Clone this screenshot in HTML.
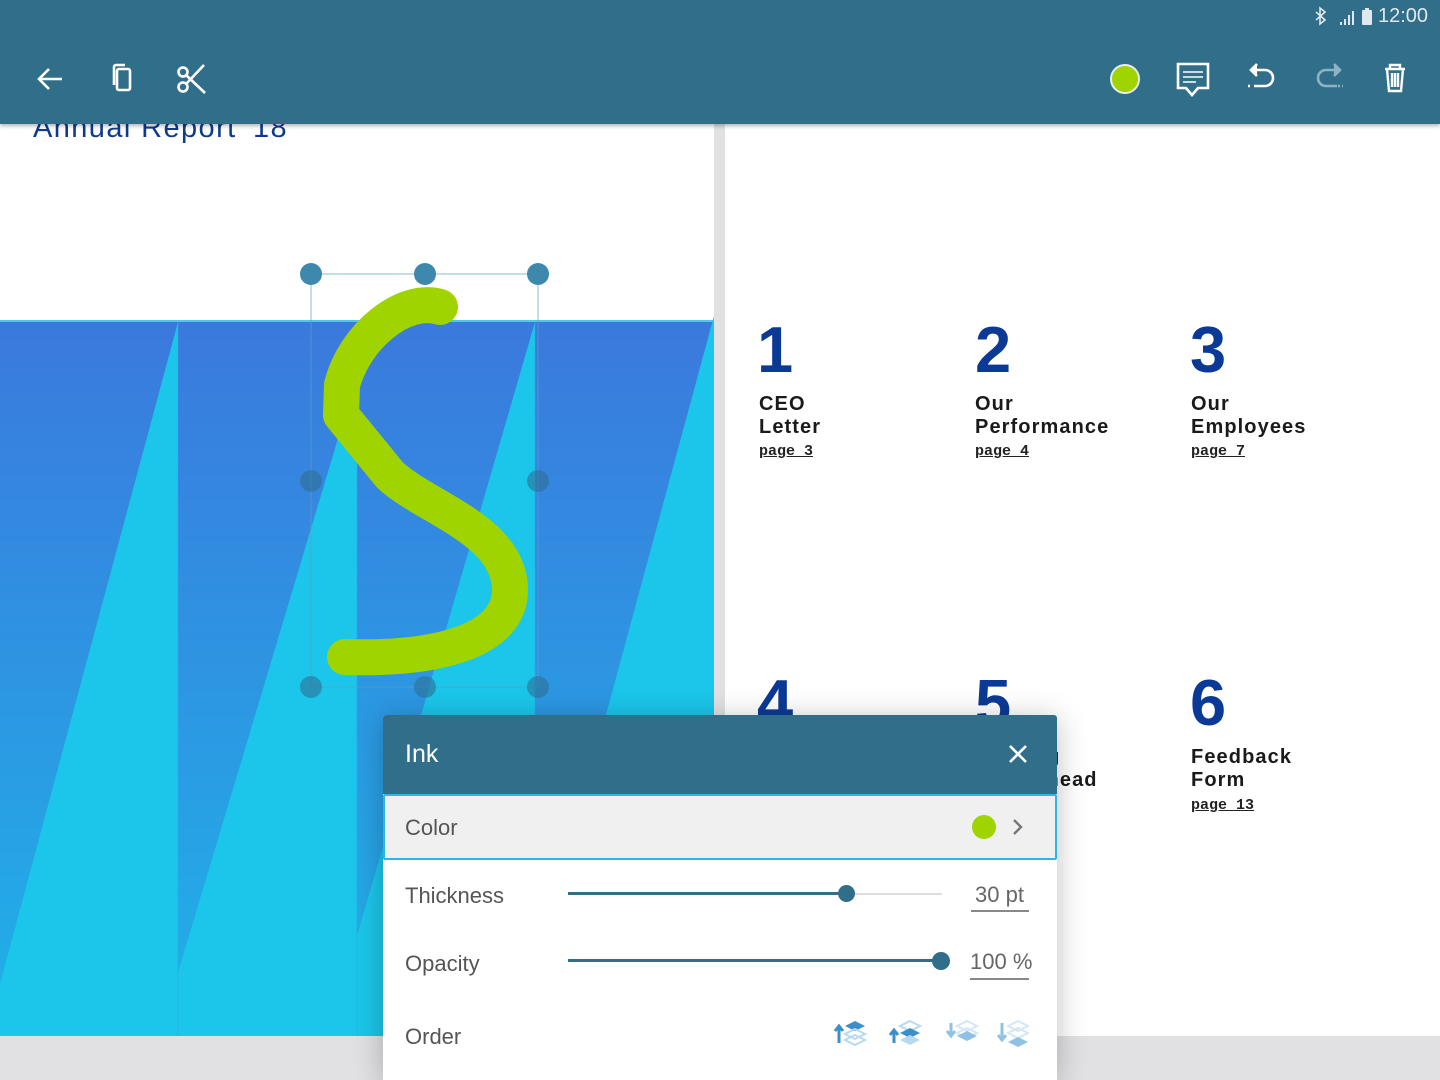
<!DOCTYPE html>
<html><head><meta charset="utf-8"><style>
*{margin:0;padding:0;box-sizing:border-box}
body{width:1440px;height:1080px;overflow:hidden;position:relative;background:#e1e1e3;font-family:"Liberation Sans",sans-serif}
.abs{position:absolute}
.num{position:absolute;font-weight:bold;font-size:65px;color:#0b3a96;line-height:1}
.lab{position:absolute;font-weight:bold;font-size:20px;color:#1a1a1a;line-height:23px;letter-spacing:1.1px}
.pg{position:absolute;font-family:"Liberation Mono",monospace;font-size:15px;color:#222;text-decoration:underline;font-weight:bold}
.prow{position:absolute;left:405px;font-size:22px;color:#555}
</style></head><body>
<div class="abs" style="left:0;top:0;width:714px;height:1036px;background:#fff"></div>
<div class="abs" style="left:725px;top:0;width:715px;height:1036px;background:#fff"></div>
<div class="abs" style="left:33px;top:112px;font-size:29px;color:#0d3a8c;letter-spacing:1.4px">Annual Report '18</div>
<svg class="abs" style="left:0;top:0" width="714" height="1036">
<defs><linearGradient id="g" x1="0" y1="0" x2="0" y2="1"><stop offset="0" stop-color="#3b79dd"/><stop offset="1" stop-color="#1fb2e8"/></linearGradient></defs>
<rect x="0" y="320" width="714" height="716" fill="url(#g)"/>
<rect x="0" y="320" width="714" height="2" fill="#4fc7f0"/>
<g fill="#1bc6ea">
<polygon points="178,322 178,1036 -14,1036"/>
<polygon points="357,375 357,1036 159,1036"/>
<polygon points="535,322 535,1036 328,1036"/>
<polygon points="714,316 714,1036 519,1036"/>
</g>
<g stroke="#2fa8e0" stroke-width="1" opacity="0.5"><line x1="178" y1="322" x2="178" y2="1036"/><line x1="357" y1="322" x2="357" y2="1036"/><line x1="535" y1="322" x2="535" y2="1036"/></g>
<rect x="311" y="274" width="227" height="413" fill="none" stroke="#5a9ec0" stroke-width="1" opacity="0.7"/>
<path d="M440,307 C405,296 355,335 342,385 L341,415 L390,475 C425,508 510,530 510,590 C510,640 440,660 345,657" fill="none" stroke="#9fd400" stroke-width="36" stroke-linecap="round" stroke-linejoin="round"/>
<g fill="#3d88ad"><circle cx="311" cy="274" r="11"/><circle cx="425" cy="274" r="11"/><circle cx="538" cy="274" r="11"/></g>
<g fill="#2f6f95" opacity="0.6"><circle cx="311" cy="481" r="11"/><circle cx="538" cy="481" r="11"/><circle cx="311" cy="687" r="11"/><circle cx="425" cy="687" r="11"/><circle cx="538" cy="687" r="11"/></g>
</svg>
<div class="num" style="left:757px;top:317px">1</div>
<div class="num" style="left:975px;top:317px">2</div>
<div class="num" style="left:1190px;top:317px">3</div>
<div class="lab" style="left:759px;top:393px">CEO<br>Letter</div>
<div class="lab" style="left:975px;top:393px">Our<br>Performance</div>
<div class="lab" style="left:1191px;top:393px">Our<br>Employees</div>
<div class="pg" style="left:759px;top:443px">page 3</div>
<div class="pg" style="left:975px;top:443px">page 4</div>
<div class="pg" style="left:1191px;top:443px">page 7</div>
<div class="num" style="left:757px;top:670px">4</div>
<div class="num" style="left:975px;top:670px">5</div>
<div class="num" style="left:1190px;top:670px">6</div>
<div class="lab" style="left:975px;top:746px">Looking</div>
<div class="lab" style="left:1031px;top:769px">Ahead</div>
<div class="lab" style="left:1191px;top:746px">Feedback<br>Form</div>
<div class="pg" style="left:1191px;top:797px">page 13</div>
<div class="abs" style="left:0;top:0;width:1440px;height:124px;background:#316e8a;box-shadow:0 2px 4px rgba(0,0,0,0.3)"></div>
<div class="abs" style="left:1378px;top:5px;font-size:20px;color:#dfe8ee">12:00</div>
<svg class="abs" style="left:1310px;top:6px" width="66" height="22" fill="none" stroke="#dfe8ee" stroke-width="1.6">
<path d="M6,6 L15,14 L10,18 L10,2 L15,6 L6,14"/>
<g fill="#dfe8ee" stroke="none"><rect x="30" y="16" width="2" height="3"/><rect x="34" y="13" width="2" height="6"/><rect x="38" y="9" width="2" height="10"/><rect x="42" y="5" width="2" height="14"/><rect x="52" y="4" width="10" height="15" rx="1"/><rect x="55" y="2" width="4" height="3"/></g>
</svg>
<svg class="abs" style="left:30px;top:58px" width="200" height="44" fill="none" stroke="#fff" stroke-width="2.6">
<path d="M32,21 H10 M19,11 L9,21 L19,31"/>
<rect x="87" y="11" width="13" height="21" rx="2"/><path d="M84,27 V9 a2,2 0 0 1 2,-2 H95"/>
<circle cx="153" cy="14" r="4.5"/><circle cx="153" cy="29" r="4.5"/><path d="M156,17 L175,35 M156,26 L174,7"/>
</svg>
<svg class="abs" style="left:1100px;top:55px" width="320" height="50" fill="none" stroke="#fff" stroke-width="2.6">
<circle cx="25" cy="24" r="14" fill="#9fd400" stroke="#e8eef2" stroke-width="2"/>
<path d="M78,9 H108 V33 H98 L92,40 L86,33 H78 Z"/><path d="M83,17 H103 M83,22 H103 M83,27 H96" stroke-width="1.4"/>
<path d="M156,15 H165 a8,8 0 0 1 0,16 H154" /><path d="M157,9 L151,15 L157,21" fill="#fff"/><path d="M148,31 H152" stroke-dasharray="2 2"/>
<g stroke="#8fb3c6"><path d="M235,15 H226 a8,8 0 0 0 0,16 H237"/><path d="M234,9 L240,15 L234,21" fill="#8fb3c6"/><path d="M238,31 H243" stroke-dasharray="2 2"/></g>
<path d="M285,14 H305 M290,14 V10 H300 V14 M287,14 L289,36 H301 L303,14 M292,18 V32 M295,18 V32 M298,18 V32" stroke-width="2.4"/>
</svg>
<div class="abs" style="left:383px;top:715px;width:674px;height:365px;background:#fff;box-shadow:0 4px 30px rgba(0,0,0,0.25);border-radius:3px 3px 0 0"></div>
<div class="abs" style="left:383px;top:715px;width:674px;height:79px;background:#316e8a;border-radius:3px 3px 0 0"></div>
<div class="abs" style="left:405px;top:740px;font-size:25px;color:#fff">Ink</div>
<svg class="abs" style="left:1006px;top:742px" width="24" height="24" stroke="#fff" stroke-width="2.6"><path d="M4,4 L20,20 M20,4 L4,20"/></svg>
<div class="abs" style="left:383px;top:794px;width:674px;height:66px;background:#f0f0f0;border:2px solid #2fb5e6;border-radius:2px"></div>
<div class="prow" style="top:815px">Color</div>
<div class="abs" style="left:972px;top:815px;width:24px;height:24px;border-radius:50%;background:#9fd400"></div>
<svg class="abs" style="left:1010px;top:817px" width="16" height="20" fill="none" stroke="#777" stroke-width="2.4"><path d="M4,3 L11,10 L4,17"/></svg>
<div class="prow" style="top:883px">Thickness</div>
<div class="abs" style="left:568px;top:893px;width:374px;height:2px;background:#ddd"></div>
<div class="abs" style="left:568px;top:892px;width:278px;height:3px;background:#316e8a"></div>
<div class="abs" style="left:838px;top:885px;width:17px;height:17px;border-radius:50%;background:#316e8a"></div>
<div class="abs" style="left:975px;top:882px;font-size:22px;color:#666">30 pt</div>
<div class="abs" style="left:971px;top:910px;width:58px;height:2px;background:#888"></div>
<div class="prow" style="top:951px">Opacity</div>
<div class="abs" style="left:568px;top:959px;width:374px;height:3px;background:#316e8a"></div>
<div class="abs" style="left:932px;top:952px;width:18px;height:18px;border-radius:50%;background:#316e8a"></div>
<div class="abs" style="left:970px;top:949px;font-size:22px;color:#666">100 %</div>
<div class="abs" style="left:970px;top:978px;width:59px;height:2px;background:#888"></div>
<div class="prow" style="top:1024px">Order</div>
<svg class="abs" style="left:828px;top:1015px" width="210" height="40">
<g transform="translate(5,0)"><path d="M6,28 V12 M2,16 L6,11 L10,16" stroke="#3b8fc8" stroke-width="3" fill="none"/><polygon points="22,6 32,11 22,16 12,11" fill="#3b8fc8"/><g fill="none" stroke="#b9d9ee" stroke-width="2"><polygon points="22,14 32,19 22,24 12,19"/><polygon points="22,20 32,25 22,30 12,25"/></g></g>
<g transform="translate(60,0)"><path d="M6,28 V16 M2,20 L6,15 L10,20" stroke="#3b8fc8" stroke-width="3" fill="none"/><polygon points="22,6 32,11 22,16 12,11" fill="none" stroke="#b9d9ee" stroke-width="2"/><polygon points="22,13 32,18 22,23 12,18" fill="#3b8fc8"/><polygon points="22,20 32,25 22,30 12,25" fill="#b9d9ee"/></g>
<g transform="translate(117,0)"><path d="M6,8 V20 M2,16 L6,21 L10,16" stroke="#8fc1e4" stroke-width="3" fill="none"/><g fill="none" stroke="#d4e8f4" stroke-width="2"><polygon points="22,6 32,11 22,16 12,11"/><polygon points="22,13 32,18 22,23 12,18"/></g><polygon points="22,16 32,21 22,26 12,21" fill="#8fc1e4"/></g>
<g transform="translate(168,0)"><path d="M6,8 V24 M2,20 L6,25 L10,20" stroke="#8fc1e4" stroke-width="3" fill="none"/><g fill="none" stroke="#d4e8f4" stroke-width="2"><polygon points="22,6 32,11 22,16 12,11"/><polygon points="22,13 32,18 22,23 12,18"/></g><polygon points="22,22 32,27 22,32 12,27" fill="#8fc1e4"/></g>
</svg>
</body></html>
